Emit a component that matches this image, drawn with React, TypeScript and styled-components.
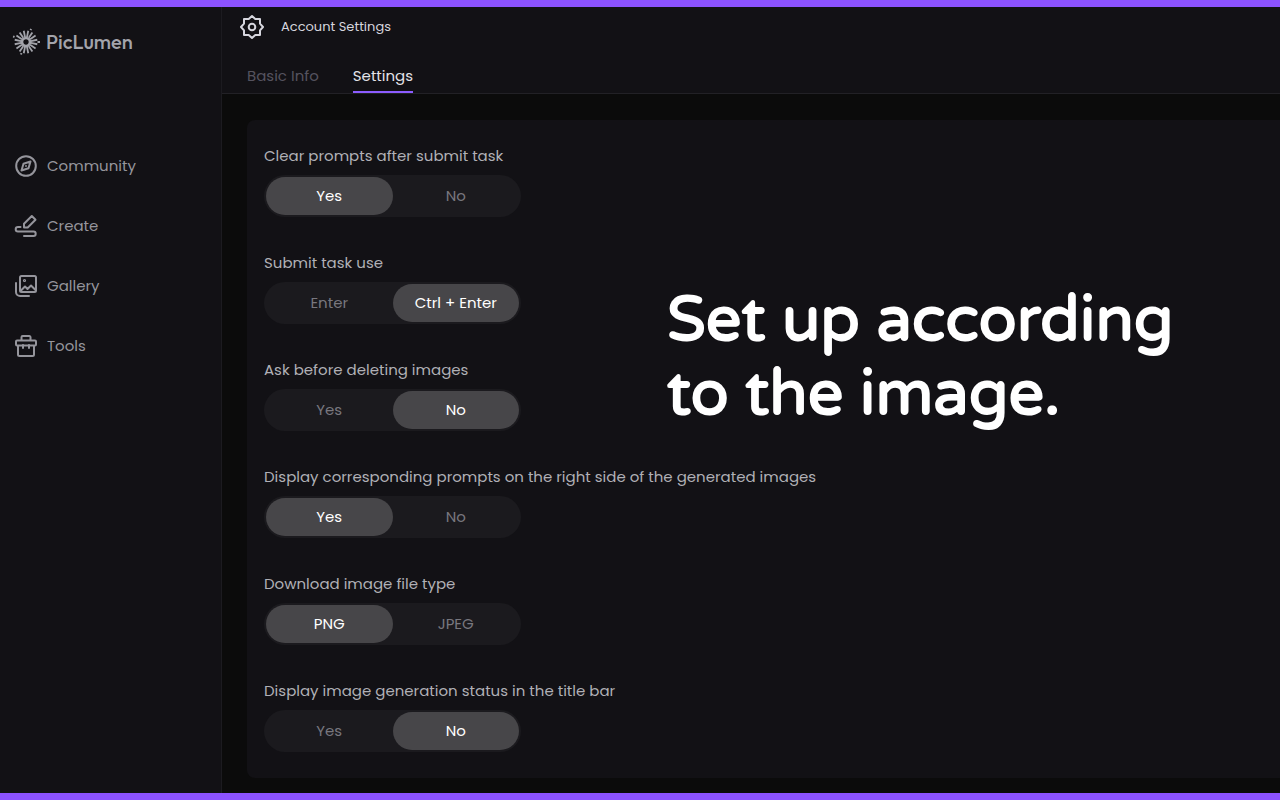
import React, { useState } from "react";
import styled, { createGlobalStyle } from "styled-components";

const GlobalStyle = createGlobalStyle`
  * { box-sizing: border-box; }
  body {
    margin: 0;
    background: #0b0b0b;
    color: #b0b0b6;
    font-family: Poppins, Inter, "Liberation Sans", sans-serif;
    font-size: 15px;
    line-height: 24px;
  }
`;

const Page = styled.div`
  display: flex;
  min-height: 100vh;
  border-top: 7px solid #8c52ff;
  border-bottom: 7px solid #8c52ff;
`;

const Sidebar = styled.aside`
  flex: 0 0 222px;
  padding: 20px 12px;
  background: #121115;
  border-right: 1px solid #1c1b20;
`;

const Brand = styled.a`
  display: flex;
  align-items: center;
  gap: 6px;
  height: 30px;
  color: #a3a4ab;
  font-family: Outfit, Lato, sans-serif;
  font-size: 20px;
  font-weight: 500;
  text-decoration: none;
`;

const Nav = styled.nav`
  display: flex;
  flex-direction: column;
  gap: 36px;
  padding: 0 2px;
  margin-top: 97px;
`;

const NavLink = styled.a`
  display: flex;
  align-items: center;
  gap: 9px;
  color: #95959c;
  text-decoration: none;
`;

const Main = styled.main`
  flex: 1;
  min-width: 0;
`;

const Header = styled.header`
  background: #121115;
  border-bottom: 1px solid #222126;
`;

const TitleBar = styled.div`
  display: flex;
  align-items: center;
  gap: 16px;
  height: 40px;
  padding-left: 17px;
  color: #d6d6de;
`;

const Title = styled.h1`
  margin: 0;
  font-size: 13px;
  font-weight: 400;
`;

const Tabs = styled.div`
  display: flex;
  gap: 34px;
  padding: 12px 25px 0;
`;

const Tab = styled.button<{ $active?: boolean }>`
  height: 34px;
  padding: 5px 0 3px;
  border: 0;
  border-bottom: 2px solid ${(p) => (p.$active ? "#8c5cff" : "transparent")};
  background: none;
  color: ${(p) => (p.$active ? "#e3e3e8" : "#55535f")};
  font: inherit;
`;

const Panel = styled.section`
  display: grid;
  grid-template-columns: auto 1fr;
  margin: 26px 0 15px 25px;
  padding: 24px 17px 26px;
  border-radius: 8px 0 0 8px;
  background: #121115;
`;

const Form = styled.form`
  display: flex;
  flex-direction: column;
  gap: 34px;
  width: 400px;
`;

const Setting = styled.fieldset`
  min-width: 0;
  margin: 0;
  padding: 0;
  border: 0;
`;

const Legend = styled.legend`
  padding: 0;
  margin-bottom: 7px;
  white-space: nowrap;
`;

const Toggle = styled.div`
  display: flex;
  width: 257px;
  height: 42px;
  padding: 2px;
  border-radius: 21px;
  background: #1b1a1e;
`;

const Option = styled.label<{ $on: boolean }>`
  display: flex;
  flex: 1;
  align-items: center;
  justify-content: center;
  border-radius: 19px;
  background: ${(p) => (p.$on ? "#474649" : "transparent")};
  color: ${(p) => (p.$on ? "#ffffff" : "#78777e")};
  cursor: pointer;
`;

const Radio = styled.input`
  appearance: none;
  width: 0;
  height: 0;
  margin: 0;
`;

const Callout = styled.p`
  margin: 139px 0 0 3px;
  color: #fff;
  font-family: "Arial Rounded MT Bold", "Varela Round", "Liberation Sans", sans-serif;
  font-size: 63px;
  font-weight: 700;
  line-height: 74px;
  white-space: nowrap;
`;

const Icon = styled.svg`
  flex: none;
  fill: none;
  stroke: currentColor;
  stroke-width: 2;
  stroke-linecap: round;
  stroke-linejoin: round;
`;

const rays = Array.from({ length: 16 }, (_, i) => i * 22.5 + 11.25);

function Logo() {
  return (
    <Icon width="28" height="28" viewBox="-14 -14 28 28">
      <circle r="4" strokeWidth="2.6" />
      {rays.map((a) => (
        <line key={a} x1="5" x2="11.500" y1="0" y2="0" strokeWidth="1.800" strokeLinecap="butt" transform={`rotate(${a})`} />
      ))}
      <path d="M11.500 0h2.500M4.600-11.800l.5-1.200M-11.500-5l-1.400-.6M-4.500 11.200l-.5 1.300" strokeWidth="2" strokeLinecap="butt" />
    </Icon>
  );
}

const CommunityIcon = () => (
  <Icon width="24" height="24" viewBox="0 0 24 24">
    <circle cx="12" cy="12" r="9.800" />
    <path d="M16.500 7.500 14.500 14.300 7.500 16.500 9.500 9.700Z" />
    <circle cx="12" cy="12" r=".4" strokeWidth="1.200" />
  </Icon>
);

const CreateIcon = () => (
  <Icon width="24" height="24" viewBox="0 0 24 24">
    <path d="M10 9.800 17.800 2 21.500 5.700 13.700 13.500H10ZM6.500 13H4a2.300 2.300 0 0 0 0 4.600h15.500a2.200 2.200 0 0 1 0 4.400H10" />
  </Icon>
);

const GalleryIcon = () => (
  <Icon width="24" height="24" viewBox="0 0 24 24">
    <rect x="6" y="2" width="16" height="16" rx="1.500" />
    <path d="M2 9v9a4 4 0 0 0 4 4h9M7 16.500l4-4 2.500 2.500L17 11.500l4.500 4.500" />
    <circle cx="10.500" cy="6.500" r=".6" />
  </Icon>
);

const ToolsIcon = () => (
  <Icon width="24" height="24" viewBox="0 0 24 24">
    <path d="M7.500 6V3.200A1.200 1.200 0 0 1 8.700 2h6.600a1.200 1.200 0 0 1 1.200 1.200V6M4 12v8.500A1.500 1.500 0 0 0 5.500 22h13a1.500 1.500 0 0 0 1.500-1.500V12M9 11v3M15 11v3" />
    <rect x="2" y="6.500" width="20" height="5" rx="1" />
  </Icon>
);

const SettingsIcon = () => (
  <Icon width="26" height="26" viewBox="-13 -13 26 26">
    <path d="M0-11 3.300-8H8V-3.300L11 0 8 3.300V8H3.300L0 11-3.300 8H-8V3.300L-11 0-8-3.300V-8H-3.300Z" />
    <circle r="3.300" />
  </Icon>
);

const links = [
  { name: "Community", Glyph: CommunityIcon },
  { name: "Create", Glyph: CreateIcon },
  { name: "Gallery", Glyph: GalleryIcon },
  { name: "Tools", Glyph: ToolsIcon },
];

const settings = [
  { id: "clear", label: "Clear prompts after submit task", options: ["Yes", "No"], value: 0 },
  { id: "submit", label: "Submit task use", options: ["Enter", "Ctrl + Enter"], value: 1 },
  { id: "ask", label: "Ask before deleting images", options: ["Yes", "No"], value: 1 },
  { id: "prompts", label: "Display corresponding prompts on the right side of the generated images", options: ["Yes", "No"], value: 0 },
  { id: "type", label: "Download image file type", options: ["PNG", "JPEG"], value: 0 },
  { id: "status", label: "Display image generation status in the title bar", options: ["Yes", "No"], value: 1 },
];

export default function App() {
  const [values, setValues] = useState(settings.map((s) => s.value));
  const choose = (row: number, option: number) =>
    setValues((prev) => prev.map((v, i) => (i === row ? option : v)));

  return (
    <>
      <GlobalStyle />
      <Page>
        <Sidebar>
          <Brand href="#home">
            <Logo />
            PicLumen
          </Brand>
          <Nav>
            {links.map(({ name, Glyph }) => (
              <NavLink key={name} href={`#${name.toLowerCase()}`}>
                <Glyph />
                {name}
              </NavLink>
            ))}
          </Nav>
        </Sidebar>
        <Main>
          <Header>
            <TitleBar>
              <SettingsIcon />
              <Title>Account Settings</Title>
            </TitleBar>
            <Tabs role="tablist">
              <Tab type="button" role="tab" aria-selected={false}>Basic Info</Tab>
              <Tab type="button" role="tab" aria-selected $active>Settings</Tab>
            </Tabs>
          </Header>
          <Panel>
            <Form>
              {settings.map((s, row) => (
                <Setting key={s.id}>
                  <Legend>{s.label}</Legend>
                  <Toggle>
                    {s.options.map((text, i) => (
                      <Option key={text} $on={values[row] === i}>
                        <Radio type="radio" name={s.id} checked={values[row] === i} onChange={() => choose(row, i)} />
                        {text}
                      </Option>
                    ))}
                  </Toggle>
                </Setting>
              ))}
            </Form>
            <Callout>
              Set up according
              <br />
              to the image.
            </Callout>
          </Panel>
        </Main>
      </Page>
    </>
  );
}
